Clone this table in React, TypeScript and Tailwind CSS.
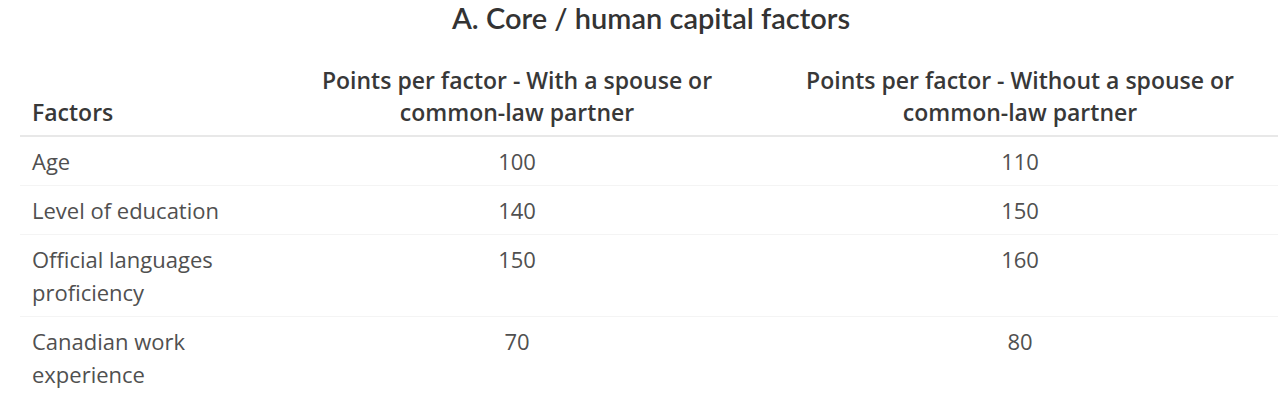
import React from 'react';

const rows = [
  { factor: 'Age', withSpouse: '100', withoutSpouse: '110' },
  { factor: 'Level of education', withSpouse: '140', withoutSpouse: '150' },
  { factor: 'Official languages proficiency', withSpouse: '150', withoutSpouse: '160' },
  { factor: 'Canadian work experience', withSpouse: '70', withoutSpouse: '80' },
];

const App: React.FC = () => {
  return (
    <div className="w-[1286px] h-[408px] bg-white overflow-hidden">
      <h2 className="pl-4 text-center font-['Lato',sans-serif] text-[29px] leading-[36px] font-semibold text-[#333333]">
        A. Core / human capital factors
      </h2>

      <table className="ml-[20px] mt-[28px] w-[1258px] table-fixed border-collapse font-['Open_Sans',sans-serif] text-[22px] leading-[32px]">
        <colgroup>
          <col className="w-[252px]" />
          <col className="w-[490px]" />
          <col className="w-[516px]" />
        </colgroup>
        <thead>
          <tr className="border-b-2 border-[#e8e8e8] text-[#383838] text-[23px]">
            <th className="px-3 pb-[7px] text-left align-bottom font-semibold">Factors</th>
            <th className="px-3 pb-[7px] text-center align-bottom font-semibold">
              Points per factor - With a spouse or <span className="whitespace-nowrap">common-law</span> partner
            </th>
            <th className="px-3 pb-[7px] text-center align-bottom font-semibold">
              Points per factor - Without a spouse or <span className="whitespace-nowrap">common-law</span> partner
            </th>
          </tr>
        </thead>
        <tbody className="text-[#505050] leading-[33px]">
          {rows.map((row) => (
            <tr key={row.factor} className="border-b border-[#f4f4f4] last:border-b-0">
              <td className="px-3 pt-[8px] pb-[7px] align-top">{row.factor}</td>
              <td className="px-3 pt-[8px] pb-[7px] align-top text-center">{row.withSpouse}</td>
              <td className="px-3 pt-[8px] pb-[7px] align-top text-center">{row.withoutSpouse}</td>
            </tr>
          ))}
        </tbody>
      </table>
    </div>
  );
};

export default App;
